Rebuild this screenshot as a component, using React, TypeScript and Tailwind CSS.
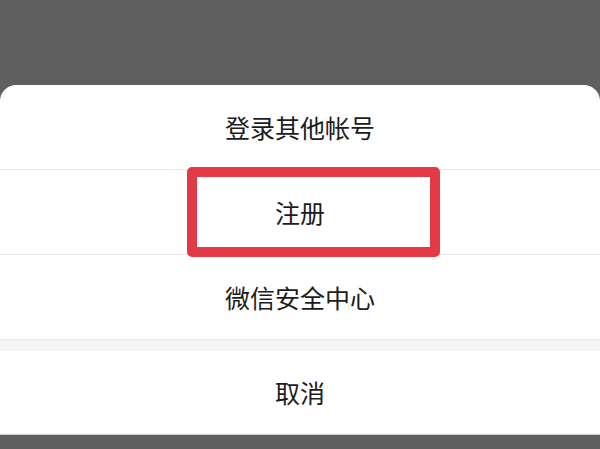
import React from 'react';

const items = ['登录其他帐号', '注册', '微信安全中心'];

const App: React.FC = () => {
  return (
    <div
      className="w-[600px] h-[449px] bg-[#5f5f5f] pt-[85px] overflow-hidden"
      style={{ fontFamily: '"Noto Sans CJK SC", "Noto Sans", sans-serif' }}
    >
      <div className="bg-white rounded-t-[16px] overflow-hidden">
        {items.map((label, i) => (
          <div
            key={label}
            className="relative h-[85px] border-b border-[#e9e9e9] flex items-center justify-center"
          >
            <span className="text-[25px] leading-none text-[#1c1c1c]">{label}</span>
            {i === 1 && (
              <div className="absolute left-[187px] top-[-3px] w-[253px] h-[90px] border-[10px] border-[#e33a48] rounded-[5px]" />
            )}
          </div>
        ))}
        <div className="h-[11px] bg-[#f5f5f5]" />
        <div className="h-[84px] border-b border-[#cfcfcf] flex items-center justify-center">
          <span className="text-[25px] leading-none text-[#1c1c1c]">取消</span>
        </div>
      </div>
    </div>
  );
};

export default App;
